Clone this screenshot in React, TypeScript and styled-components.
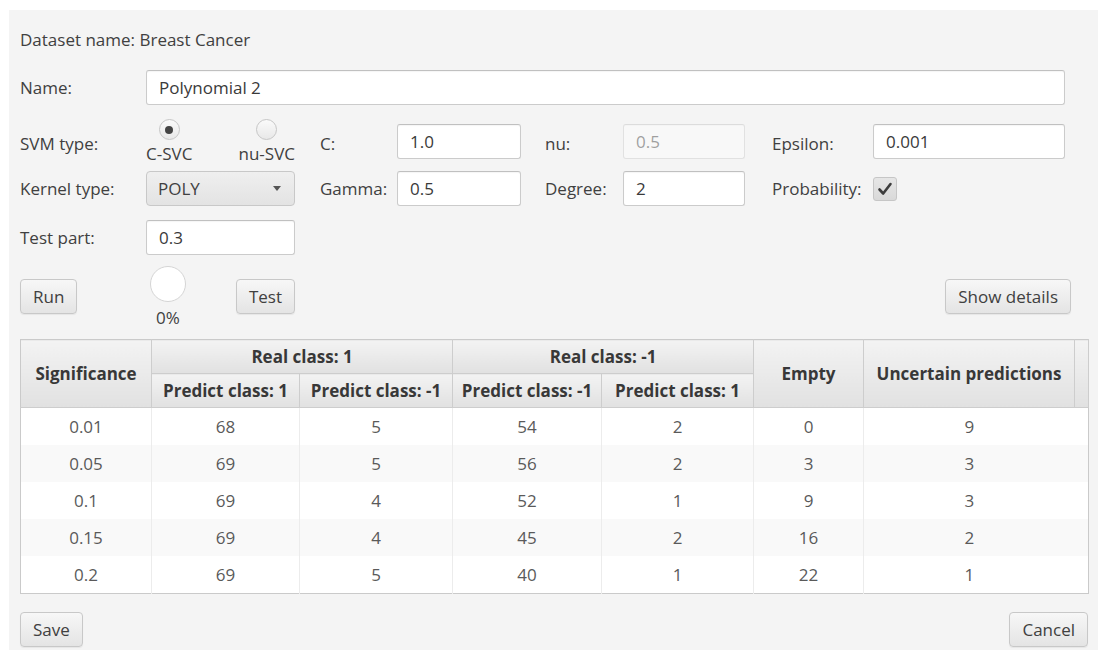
import React from "react";
import styled, { createGlobalStyle } from "styled-components";

const GlobalStyle = createGlobalStyle`
  html, body {
    margin: 0;
    padding: 0;
    background: #ffffff;
    overflow: hidden;
  }
  body {
    font-family: "Open Sans", "Noto Sans", sans-serif;
  }
`;

const Dialog = styled.div`
  margin: 10px 0 0 9px;
  height: 640px;
  box-sizing: border-box;
  background: #f4f4f4;
  padding: 20px 10px 0 11px;
  display: flex;
  flex-direction: column;
  color: #404040;
  font-size: 17px;
`;

const DatasetLine = styled.div`
  height: 20px;
  line-height: 20px;
  margin-bottom: 20px;
`;

const FormGrid = styled.div`
  display: grid;
  grid-template-columns: 126px 149px 102px 124px 102px 122px 128px 192px;
  grid-template-rows: 35px 60px 47px 51px 66px;
  align-items: center;
`;

const FieldLabel = styled.span<{ $indent?: number; $drop?: boolean }>`
  padding-left: ${(p) => p.$indent ?? 0}px;
  margin-top: ${(p) => (p.$drop ? 16 : 0)}px;
  white-space: nowrap;
`;

const TextField = styled.input<{ $span?: string; $drop?: boolean }>`
  grid-column: ${(p) => p.$span ?? "auto"};
  margin-top: ${(p) => (p.$drop ? 12 : 0)}px;
  height: 35px;
  box-sizing: border-box;
  padding: 0 12px;
  font: inherit;
  color: #3a3a3a;
  background: #fff;
  border: 1px solid #cbcbcb;
  border-top-color: #c0c0c0;
  border-radius: 3px;
  box-shadow: inset 0 1px 1px rgba(0, 0, 0, 0.04);
  outline: none;
  &:disabled {
    opacity: 0.45;
    background: #fff;
  }
`;

const RadioGroup = styled.div`
  margin-top: 12px;
  display: flex;
  justify-content: space-between;
`;

const RadioItem = styled.div`
  display: flex;
  flex-direction: column;
  align-items: center;
  gap: 4px;
  line-height: 19px;
`;

const RadioCircle = styled.div<{ $on?: boolean }>`
  width: 21px;
  height: 21px;
  box-sizing: border-box;
  border-radius: 50%;
  border: 1px solid #c6c6c6;
  background: linear-gradient(#fafafa, #e8e8e8);
  display: flex;
  align-items: center;
  justify-content: center;
  &::after {
    content: "";
    display: ${(p) => (p.$on ? "block" : "none")};
    width: 8px;
    height: 8px;
    border-radius: 50%;
    background: #444;
  }
`;

const ComboBox = styled.div`
  height: 35px;
  box-sizing: border-box;
  padding: 0 13px 0 11px;
  display: flex;
  align-items: center;
  justify-content: space-between;
  border: 1px solid #c8c8c8;
  border-radius: 4px;
  background: linear-gradient(#efefef, #e3e3e3);
`;

const ComboArrow = styled.span`
  width: 0;
  height: 0;
  border-left: 4px solid transparent;
  border-right: 4px solid transparent;
  border-top: 5px solid #555;
`;

const CheckBox = styled.div`
  width: 24px;
  height: 24px;
  box-sizing: border-box;
  border: 1px solid #c6c6c6;
  border-radius: 3px;
  background: linear-gradient(#e6e6e6, #d9d9d9);
  display: flex;
  align-items: center;
  justify-content: center;
`;

const Button = styled.button`
  height: 35px;
  box-sizing: border-box;
  padding: 0 12px;
  font: inherit;
  color: #404040;
  border: 1px solid #c8c8c8;
  border-radius: 4px;
  background: linear-gradient(#f7f7f7, #e4e4e4);
  box-shadow: 0 1px 1px rgba(0, 0, 0, 0.06);
  white-space: nowrap;
  cursor: default;
`;

const RunCell = styled.div`
  justify-self: start;
`;

const ProgressRow = styled.div`
  display: flex;
  align-items: center;
  justify-content: space-between;
`;

const Progress = styled.div`
  margin-left: 4px;
  display: flex;
  flex-direction: column;
  align-items: center;
  gap: 6px;
  line-height: 19px;
`;

const ProgressDisk = styled.div`
  width: 36px;
  height: 36px;
  box-sizing: border-box;
  border-radius: 50%;
  border: 1px solid #d5d5d5;
  background: #fff;
`;

const DetailsCell = styled.div`
  grid-column: 7 / 9;
  justify-self: end;
  margin-right: -6px;
`;

const Table = styled.table`
  margin-top: 10px;
  width: 1068px;
  table-layout: fixed;
  border-collapse: collapse;
  background: #fff;
  border: 1px solid #cacaca;
  font-size: 17px;
`;

const HeadCell = styled.th`
  height: 33px;
  padding: 0;
  font-weight: 700;
  color: #383838;
  text-align: center;
  white-space: nowrap;
  background: linear-gradient(#f3f3f3, #e1e1e1);
  border-right: 1px solid #cdcdcd;
  border-bottom: 1px solid #cdcdcd;
`;

const Row = styled.tr<{ $odd: boolean }>`
  background: ${(p) => (p.$odd ? "#f9f9f9" : "#ffffff")};
`;

const Cell = styled.td`
  height: 37px;
  padding: 0;
  text-align: center;
  color: #5a5a5a;
  border-right: 1px solid #ececec;
  &:nth-last-child(-n + 2) {
    border-right: none;
  }
`;

const Footer = styled.div`
  margin-top: 18px;
  display: flex;
  justify-content: space-between;
`;

const rows = [
  ["0.01", "68", "5", "54", "2", "0", "9"],
  ["0.05", "69", "5", "56", "2", "3", "3"],
  ["0.1", "69", "4", "52", "1", "9", "3"],
  ["0.15", "69", "4", "45", "2", "16", "2"],
  ["0.2", "69", "5", "40", "1", "22", "1"],
];

const colWidths = [131, 148, 153, 149, 152, 110, 211, 14];

export default function App() {
  return (
    <>
      <GlobalStyle />
      <Dialog>
        <DatasetLine>Dataset name: Breast Cancer</DatasetLine>
        <FormGrid>
          <FieldLabel>Name:</FieldLabel>
          <TextField $span="2 / 9" defaultValue="Polynomial 2" readOnly />

          <FieldLabel $drop>SVM type:</FieldLabel>
          <RadioGroup>
            <RadioItem>
              <RadioCircle $on />
              C-SVC
            </RadioItem>
            <RadioItem>
              <RadioCircle />
              nu-SVC
            </RadioItem>
          </RadioGroup>
          <FieldLabel $indent={25} $drop>C:</FieldLabel>
          <TextField $drop defaultValue="1.0" readOnly />
          <FieldLabel $indent={24} $drop>nu:</FieldLabel>
          <TextField $drop defaultValue="0.5" disabled />
          <FieldLabel $indent={27} $drop>Epsilon:</FieldLabel>
          <TextField $drop defaultValue="0.001" readOnly />

          <FieldLabel>Kernel type:</FieldLabel>
          <ComboBox>
            POLY
            <ComboArrow />
          </ComboBox>
          <FieldLabel $indent={25}>Gamma:</FieldLabel>
          <TextField defaultValue="0.5" readOnly />
          <FieldLabel $indent={24}>Degree:</FieldLabel>
          <TextField defaultValue="2" readOnly />
          <FieldLabel $indent={27}>Probability:</FieldLabel>
          <CheckBox>
            <svg width="18" height="18" viewBox="0 0 18 18">
              <path d="M3.5 9.5 L7.2 13.5 L14.5 4" fill="none" stroke="#3d3d3d" strokeWidth="2.6" strokeLinecap="round" strokeLinejoin="round" />
            </svg>
          </CheckBox>

          <FieldLabel>Test part:</FieldLabel>
          <TextField defaultValue="0.3" readOnly />
          <span />
          <span />
          <span />
          <span />
          <span />
          <span />

          <RunCell>
            <Button>Run</Button>
          </RunCell>
          <ProgressRow>
            <Progress>
              <ProgressDisk />
              0%
            </Progress>
            <Button>Test</Button>
          </ProgressRow>
          <DetailsCell>
            <Button>Show details</Button>
          </DetailsCell>
        </FormGrid>

        <Table>
          <colgroup>
            {colWidths.map((w, i) => (
              <col key={i} style={{ width: w }} />
            ))}
          </colgroup>
          <thead>
            <tr>
              <HeadCell rowSpan={2}>Significance</HeadCell>
              <HeadCell colSpan={2}>Real class: 1</HeadCell>
              <HeadCell colSpan={2}>Real class: -1</HeadCell>
              <HeadCell rowSpan={2}>Empty</HeadCell>
              <HeadCell rowSpan={2}>Uncertain predictions</HeadCell>
              <HeadCell rowSpan={2} />
            </tr>
            <tr>
              <HeadCell>Predict class: 1</HeadCell>
              <HeadCell>Predict class: -1</HeadCell>
              <HeadCell>Predict class: -1</HeadCell>
              <HeadCell>Predict class: 1</HeadCell>
            </tr>
          </thead>
          <tbody>
            {rows.map((r, i) => (
              <Row key={r[0]} $odd={i % 2 === 1}>
                {r.map((v, j) => (
                  <Cell key={j}>{v}</Cell>
                ))}
                <Cell />
              </Row>
            ))}
          </tbody>
        </Table>

        <Footer>
          <Button>Save</Button>
          <Button>Cancel</Button>
        </Footer>
      </Dialog>
    </>
  );
}
